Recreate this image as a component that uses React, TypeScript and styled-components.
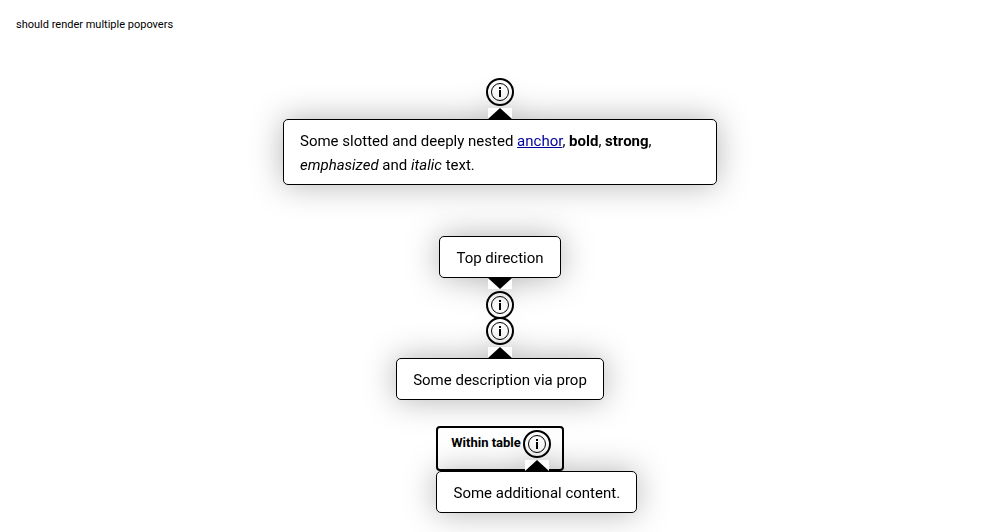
import React from 'react';
import styled, { createGlobalStyle, css } from 'styled-components';

const GlobalStyle = createGlobalStyle`
  *, *::before, *::after { box-sizing: border-box; }
  body {
    margin: 0;
    background: #fff;
    color: #000;
    font-family: Roboto, "Liberation Sans", sans-serif;
  }
`;

const Page = styled.main`
  min-height: 100vh;
  padding: 16px;
`;

const Title = styled.p`
  margin: 0;
  font-size: 11px;
  line-height: 18px;
`;

const Examples = styled.div`
  display: flex;
  flex-direction: column;
  align-items: center;
  padding-top: 46px;
`;

const Stack = styled.div`
  display: flex;
  flex-direction: column;
  gap: 2px;
  margin: 189px 0 83px;
`;

const Anchor = styled.div`
  position: relative;
  width: 24px;
  height: 24px;
`;

const Trigger = styled.button`
  display: block;
  width: 24px;
  height: 24px;
  padding: 0;
  border: 0;
  border-radius: 50%;
  outline: 2px solid #000;
  background: transparent;
  color: #000;
  cursor: pointer;

  svg { display: block; }
`;

type Direction = 'top' | 'bottom';

const Layer = styled.div<{ $direction: Direction }>`
  position: absolute;
  left: calc(50% - 217px);
  z-index: 1;
  display: flex;
  flex-direction: ${({ $direction }) => ($direction === 'top' ? 'column-reverse' : 'column')};
  align-items: center;
  width: 434px;
  pointer-events: none;
  filter: drop-shadow(0 0 16px rgba(0, 0, 0, 0.3));
  ${({ $direction }) =>
    $direction === 'top' ? css`bottom: calc(100% + 4px);` : css`top: calc(100% + 4px);`}
`;

const Arrow = styled.span<{ $direction: Direction }>`
  height: 11px;
  border: solid #fff;
  ${({ $direction }) =>
    $direction === 'top'
      ? css`
          border-width: 11px 12px 0;
          border-top-color: #000;
        `
      : css`
          border-width: 0 12px 11px;
          border-bottom-color: #000;
        `}
`;

const Bubble = styled.div`
  padding: 9px 16px 7px;
  border: 1px solid #000;
  border-radius: 5px;
  background: #fff;
  font-size: 15px;
  font-weight: 400;
  line-height: 24px;
  text-align: left;
  pointer-events: auto;
`;

const Link = styled.a`
  color: #00009f;
  text-decoration: underline;
`;

const Table = styled.table`
  border: 2px solid #000;
  border-radius: 4px;
  border-spacing: 0;
`;

const HeadCell = styled.th`
  padding: 4px 13px 13px;
  font-size: 13px;
  line-height: 22px;
  font-weight: 700;
`;

const HeadContent = styled.div`
  display: flex;
  align-items: flex-start;
  gap: 4px;
`;

function InfoIcon() {
  return (
    <svg width="24" height="24" viewBox="0 0 24 24" aria-hidden="true">
      <circle cx="12" cy="12" r="8.5" fill="none" stroke="currentColor" />
      <path d="M11 7h2v2h-2zM11 10h2v7h-2z" fill="currentColor" />
    </svg>
  );
}

function Popover({ direction = 'bottom', children }: { direction?: Direction; children: React.ReactNode }) {
  return (
    <Anchor>
      <Trigger type="button" aria-label="More information" aria-expanded="true">
        <InfoIcon />
      </Trigger>
      <Layer $direction={direction}>
        <Arrow $direction={direction} />
        <Bubble>{children}</Bubble>
      </Layer>
    </Anchor>
  );
}

export default function App() {
  return (
    <>
      <GlobalStyle />
      <Page>
        <Title>should render multiple popovers</Title>
        <Examples>
          <Popover>
            Some slotted and deeply nested <Link href="#">anchor</Link>, <b>bold</b>, <strong>strong</strong>,{' '}
            <em>emphasized</em> and <i>italic</i> text.
          </Popover>
          <Stack>
            <Popover direction="top">Top direction</Popover>
            <Popover>Some description via prop</Popover>
          </Stack>
          <Table>
            <thead>
              <tr>
                <HeadCell scope="col">
                  <HeadContent>
                    Within table
                    <Popover>Some additional content.</Popover>
                  </HeadContent>
                </HeadCell>
              </tr>
            </thead>
          </Table>
        </Examples>
      </Page>
    </>
  );
}
